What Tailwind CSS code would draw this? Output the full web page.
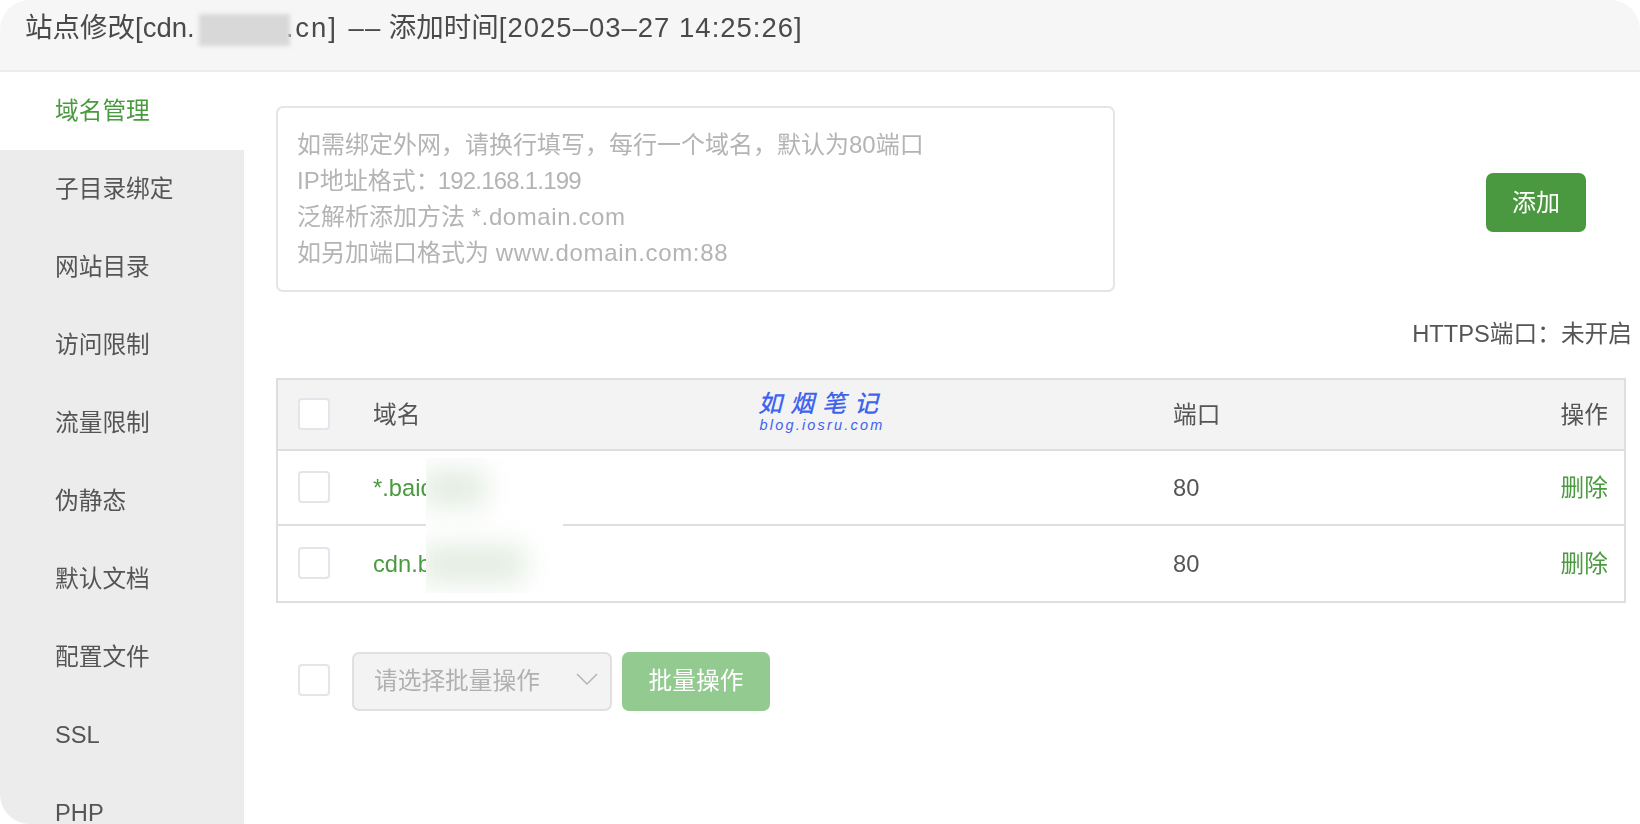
<!DOCTYPE html>
<html lang="zh-CN">
<head>
<meta charset="utf-8">
<script src="https://cdn.jsdelivr.net/npm/@tailwindcss/browser@4"></script>
<title>站点修改</title>
</head>
<body class="bg-white">
<div class="w-[1640px] h-[824px] overflow-hidden">
<div class="relative w-full h-full rounded-[30px] overflow-hidden flex flex-col bg-white text-[#555] font-['Liberation_Sans','Noto_Sans_CJK_SC',sans-serif]">
  <header class="h-[72px] shrink-0 bg-[#f6f6f6] border-b-2 border-[#ececec] pl-[25px] pt-[8px] text-[27.5px] leading-[40px] text-[#4a4a4a] blur-[0.5px] relative whitespace-nowrap">
    <span>站点修改[cdn.<span class="inline-block w-[91px]"></span><span class="tracking-[2px]">.cn]</span> <span class="tracking-[1px] ml-[3px]">––</span> 添加时间<span class="tracking-[1px]">[2025–03–27 14:25:26]</span></span>
    <span class="absolute left-[199px] top-[14px] w-[91px] h-[32px] bg-[#d8d8d8] blur-[2px]"></span>
  </header>
  <div class="flex flex-1 min-h-0">
    <nav class="w-[244px] shrink-0 bg-[#ececec] text-[23.7px] text-[#555] blur-[0.5px] overflow-hidden">
      <div class="h-[78px] pl-[55px] pt-[2px] flex items-center bg-white text-[#4a9a3f]">域名管理</div>
      <div class="h-[78px] pl-[55px] pt-[2px] flex items-center">子目录绑定</div>
      <div class="h-[78px] pl-[55px] pt-[2px] flex items-center">网站目录</div>
      <div class="h-[78px] pl-[55px] pt-[2px] flex items-center">访问限制</div>
      <div class="h-[78px] pl-[55px] pt-[2px] flex items-center">流量限制</div>
      <div class="h-[78px] pl-[55px] pt-[2px] flex items-center">伪静态</div>
      <div class="h-[78px] pl-[55px] pt-[2px] flex items-center">默认文档</div>
      <div class="h-[78px] pl-[55px] pt-[2px] flex items-center">配置文件</div>
      <div class="h-[78px] pl-[55px] pt-[2px] flex items-center">SSL</div>
      <div class="h-[78px] pl-[55px] pt-[2px] flex items-center">PHP</div>
    </nav>
    <main class="relative flex-1 pl-[32px] pr-[14px] pt-[34px] text-[23.7px]">
      <div class="flex items-start">
        <div class="w-[839px] h-[186px] border-2 border-[#e4e4ea] rounded-[7px] pl-[19px] pt-[19px] text-[24px] leading-[36px] text-[#b4b4b4] blur-[0.5px]">
          <div>如需绑定外网，请换行填写，每行一个域名，默认为80端口</div>
          <div>IP地址格式：<span class="-ml-[2px] tracking-[-0.8px]">192.168.1.199</span></div>
          <div>泛解析添加方法 <span class="tracking-[0.6px]">*.domain.com</span></div>
          <div>如另加端口格式为 <span class="tracking-[0.65px]">www.domain.com:88</span></div>
        </div>
        <button class="ml-auto mr-[40px] mt-[67px] w-[100px] h-[59px] pt-[1px] rounded-[7px] bg-[#4a983f] text-white text-[24px] blur-[0.4px]">添加</button>
      </div>
      <div class="mt-[28px] h-[30px] -mr-[6px] flex items-center justify-end text-[23.7px] text-[#555] blur-[0.4px]">HTTPS端口：未开启</div>
      <div class="mt-[28px] border-2 border-[#dedede] blur-[0.4px]">
        <div class="h-[71px] bg-[#f3f3f3] flex items-center border-b-2 border-[#dedede]">
          <span class="ml-[20px] -mt-[2px] w-[32px] h-[32px] bg-white border-2 border-[#e4e4ea] rounded-[4px]"></span>
          <span class="ml-[43px] w-[800px] pt-[2px]">域名</span>
          <span class="flex-1 pt-[2px]">端口</span>
          <span class="mr-[16px] pt-[2px]">操作</span>
        </div>
        <div class="h-[75px] flex items-center border-b-2 border-[#dedede]">
          <span class="ml-[20px] -mt-[1px] w-[32px] h-[32px] bg-white border-2 border-[#e4e4ea] rounded-[4px]"></span>
          <span class="ml-[43px] w-[800px] pt-[3px] text-[#4a9a3f]">*.baidu.com</span>
          <span class="flex-1 pt-[3px]">80</span>
          <span class="mr-[16px] pt-[3px] text-[#4a9a3f]">删除</span>
        </div>
        <div class="h-[75px] flex items-center">
          <span class="ml-[20px] -mt-[2px] w-[32px] h-[32px] bg-white border-2 border-[#e4e4ea] rounded-[4px]"></span>
          <span class="ml-[43px] w-[800px] pt-[3px] text-[#4a9a3f]">cdn.baidu.com</span>
          <span class="flex-1 pt-[3px]">80</span>
          <span class="mr-[16px] pt-[3px] text-[#4a9a3f]">删除</span>
        </div>
      </div>
      <div class="mt-[49px] flex items-center pl-[22px]">
        <span class="-mt-[4px] w-[32px] h-[32px] bg-white border-2 border-[#e4e4ea] rounded-[4px]"></span>
        <div class="ml-[22px] w-[260px] h-[59px] bg-[#f3f3f3] border-2 border-[#e0e0e0] rounded-[7px] flex items-center pl-[20px] pr-[12px] text-[#b0b0b0] blur-[0.4px]">
          <span class="flex-1">请选择批量操作</span>
          <svg class="w-[22px] h-[14px] -mt-[5px]" viewBox="0 0 22 14" fill="none" stroke="#b4b4b4" stroke-width="1.5"><path d="M1 2l10 10L21 2"/></svg>
        </div>
        <button class="ml-[10px] w-[148px] h-[59px] rounded-[7px] bg-[#93ca90] text-white text-[23.7px] blur-[0.4px]">批量操作</button>
      </div>

      <div class="absolute left-[182px] top-[386px] w-[137px] h-[135px] bg-white overflow-hidden">
        <div class="absolute -left-[6px] top-[12px] w-[66px] h-[36px] bg-[#e2ece0] blur-[14px]"></div>
        <div class="absolute -left-[6px] top-[88px] w-[105px] h-[36px] bg-[#e2ece0] blur-[14px]"></div>
      </div>
      <div class="absolute left-[513px] top-[318px] w-[130px] flex flex-col items-center italic text-[#3f63ee]">
        <div class="text-[24px] leading-[28px] font-medium tracking-[8px] whitespace-nowrap">如烟笔记</div>
        <div class="text-[14.5px] leading-[14px] tracking-[2.2px] whitespace-nowrap">blog.iosru.com</div>
      </div>
    </main>
  </div>
</div>
</div>
</body>
</html>
